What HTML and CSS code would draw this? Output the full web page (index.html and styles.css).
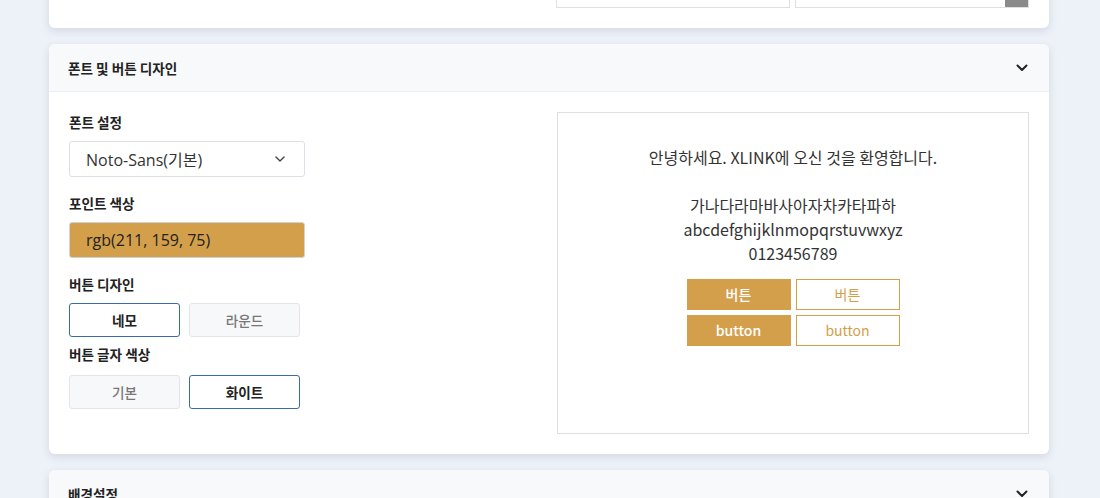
FILE: index.html
```html
<!DOCTYPE html>
<html>
<head lang="ko">
    <meta charset="UTF-8">
    <title>design</title>
<link rel="stylesheet" href="styles.css">
</head>
<body>
<div class="wrap">
    <div class="card card_top">
        <div class="top_row">
            <div class="top_input"></div>
            <div class="top_input"><span class="top_btn"></span></div>
        </div>
    </div>

    <div class="card">
        <div class="card_head">
            <span>폰트 및 버튼 디자인</span>
            <svg class="chev" width="14" height="9" viewBox="0 0 14 9"><path d="M2.5 2.5l4.5 4.5 4.5-4.5" fill="none" stroke="#222" stroke-width="2" stroke-linecap="round" stroke-linejoin="round"/></svg>
        </div>
        <div class="card_body">
            <div class="setting">
                <div class="label">폰트 설정</div>
                <div class="select">
                    <span>Noto-Sans(기본)</span>
                    <svg width="12" height="8" viewBox="0 0 12 8"><path d="M2 2l4 4 4-4" fill="none" stroke="#444" stroke-width="1.4" stroke-linecap="round" stroke-linejoin="round"/></svg>
                </div>
                <div class="label mt">포인트 색상</div>
                <div class="color_input">rgb(211, 159, 75)</div>
                <div class="label mt">버튼 디자인</div>
                <div class="btn_row">
                    <button class="opt on">네모</button>
                    <button class="opt">라운드</button>
                </div>
                <div class="label mt_s">버튼 글자 색상</div>
                <div class="btn_row">
                    <button class="opt">기본</button>
                    <button class="opt on">화이트</button>
                </div>
            </div>
            <div class="preview">
                <p class="sample">안녕하세요. XLINK에 오신 것을 환영합니다.<br><br>가나다라마바사아자차카타파하<br>abcdefghijklnmopqrstuvwxyz<br>0123456789</p>
                <div class="pv_btns">
                    <span class="pv fill">버튼</span>
                    <span class="pv line">버튼</span>
                    <span class="pv fill">button</span>
                    <span class="pv line">button</span>
                </div>
            </div>
        </div>
    </div>

    <div class="card">
        <div class="card_head">
            <span>배경설정</span>
            <svg class="chev" width="14" height="9" viewBox="0 0 14 9"><path d="M2.5 2.5l4.5 4.5 4.5-4.5" fill="none" stroke="#222" stroke-width="2" stroke-linecap="round" stroke-linejoin="round"/></svg>
        </div>
        <div class="card_body tall"></div>
    </div>
</div>
</body>
</html>
```

FILE: styles.css
```css
html, body {
	margin: 0;
	padding: 0;
}
body {
	background-color: #edf1f8;
	font-family: "Noto Sans CJK KR", "Noto Sans", sans-serif;
	color: #222;
	overflow: hidden;
}
.wrap {
	width: 1000px;
	margin: -29px 0 0 49px;
}
.card {
	background-color: #fff;
	border-radius: 6px;
	box-shadow: 0 3px 8px rgba(30, 40, 70, 0.12);
	margin-bottom: 16px;
	overflow: hidden;
}
.card_top {
	padding: 0 20px 20px;
}
.top_row {
	display: flex;
	justify-content: flex-end;
	gap: 5px;
}
.top_input {
	width: 232px;
	height: 36px;
	border: 1px solid #dcdfe4;
	border-top: none;
	display: flex;
	justify-content: flex-end;
}
.top_btn {
	width: 23px;
	background-color: #8a8a8a;
}
.card_head {
	height: 47px;
	background-color: #f8f9fb;
	border-bottom: 1px solid #ebeef3;
	display: flex;
	justify-content: space-between;
	align-items: center;
	padding: 0 20px 0 19px;
	font-size: 13.6px;
	font-weight: 700;
	color: #222;
}
.card_body {
	display: grid;
	grid-template-columns: 1fr 472px;
	gap: 16px;
	padding: 20px;
}
.card_body.tall {
	height: 200px;
}
.label {
	font-size: 13.6px;
	font-weight: 700;
	line-height: 20px;
	margin-bottom: 9px;
}
.mt {
	margin-top: 16px;
}
.mt_s {
	margin-top: 7px;
	margin-bottom: 11px;
}
.select {
	display: flex;
	justify-content: space-between;
	align-items: center;
	padding: 0 18px 0 16px;
	box-sizing: border-box;
	width: 236px;
	height: 36px;
	border: 1px solid #dde1e7;
	border-radius: 3px;
	font-family: "Open Sans", "Noto Sans CJK KR", sans-serif;
	font-size: 16px;
	color: #333;
}
.color_input {
	width: 236px;
	height: 36px;
	box-sizing: border-box;
	background-color: rgb(211, 159, 75);
	border: 1px solid #cfd3d8;
	border-radius: 3px;
	padding-left: 16px;
	line-height: 34px;
	font-family: "Open Sans", sans-serif;
	font-size: 16px;
	color: #222;
}
.btn_row {
	display: flex;
	gap: 9px;
}
.opt {
	width: 111px;
	height: 34px;
	border-radius: 3px;
	border: 1px solid #e2e5ea;
	background-color: #f7f8fa;
	color: #777;
	font-family: "Noto Sans CJK KR", sans-serif;
	font-size: 13.6px;
	font-weight: 500;
	cursor: pointer;
	padding: 0;
}
.opt.on {
	border-color: #3a6aa8;
	background-color: #fff;
	color: #222;
	font-weight: 700;
}
.preview {
	border: 1px solid #dcdfe4;
	text-align: center;
	padding-top: 32px;
	box-sizing: border-box;
	height: 322px;
}
.sample {
	margin: 0;
	font-size: 16px;
	line-height: 24px;
	color: #333;
}
.pv_btns {
	display: grid;
	grid-template-columns: 104px 104px;
	gap: 5px;
	justify-content: center;
	margin-top: 14px;
}
.pv {
	height: 31px;
	box-sizing: border-box;
	line-height: 29px;
	font-size: 14px;
	border: 1px solid #d39f4b;
}
.pv.fill {
	background-color: #d39f4b;
	color: #fff;
	font-weight: 500;
}
.pv.line {
	background-color: #fff;
	color: #d39f4b;
}
```
